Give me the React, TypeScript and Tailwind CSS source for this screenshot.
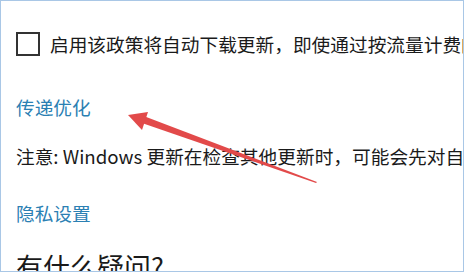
export default function App() {
  return (
    <div
      className="relative w-[464px] h-[272px] overflow-hidden bg-white border border-[#a9c7e6] text-[#1a1a1a]"
      style={{ fontFamily: '"Noto Sans CJK SC", "Noto Sans", sans-serif' }}
    >
      <div className="flex flex-col pl-[15px] pt-[31px] whitespace-nowrap">
        {/* Checkbox row */}
        <div className="flex items-center h-[24px] gap-[10px]">
          <span className="w-[24px] h-[24px] border-2 border-[#333333] shrink-0 bg-white" />
          <span className="text-[18.7px] leading-[28px]">启用该政策将自动下载更新，即使通过按流量计费的连接</span>
        </div>

        <a className="mt-[37px] text-[18.7px] leading-[28px] text-[#2b80b3]">传递优化</a>

        <p className="mt-[21px] text-[18.7px] leading-[28px]">注意: Windows 更新在检查其他更新时，可能会先对自己进行更新。</p>

        <a className="mt-[29px] text-[18.7px] leading-[28px] text-[#2b80b3]">隐私设置</a>

        <h2 className="mt-[22px] text-[27px] leading-[36px] font-normal">有什么疑问?</h2>
      </div>

      {/* annotation arrow */}
      <svg className="absolute left-0 top-0 pointer-events-none" width="464" height="272" viewBox="0 0 464 272">
        <polygon points="140,114 316,181 315,182 138,121" fill="#e24a4a" />
        <polygon points="127,114 147,111 141,129" fill="#e24a4a" />
      </svg>
    </div>
  );
}
